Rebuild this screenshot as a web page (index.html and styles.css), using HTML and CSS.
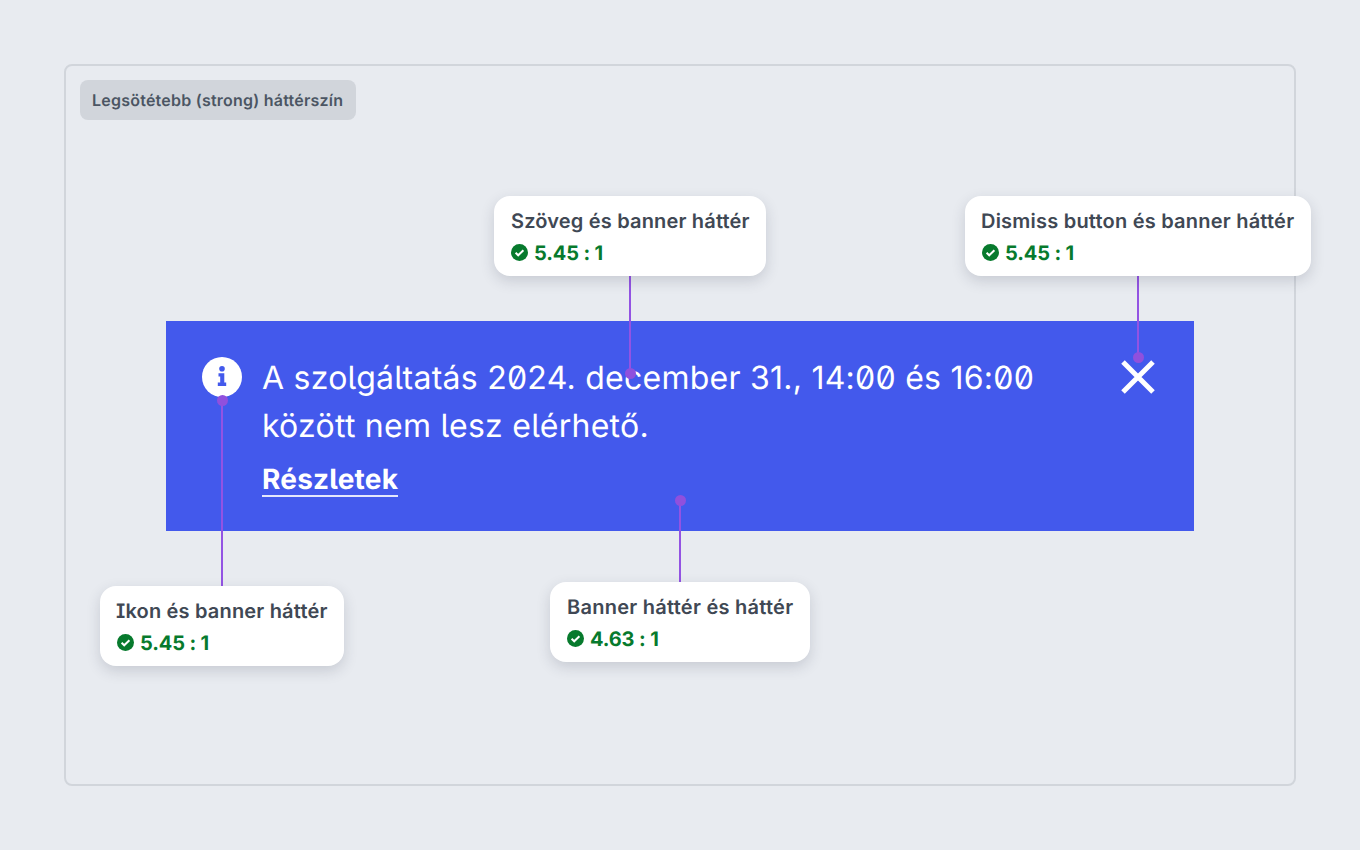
FILE: index.html
```html
<!DOCTYPE html>
<html lang="hu">
<head>
<meta charset="utf-8">
<title>Banner kontraszt</title>
<link rel="stylesheet" href="styles.css">
</head>
<body>
<main class="frame">
  <div class="tag">Legsötétebb (strong) háttérszín</div>
  <section class="banner">
    <svg class="info" viewBox="0 0 40 40" aria-hidden="true">
      <circle cx="20" cy="20" r="20" fill="#fff"/>
      <circle cx="20" cy="11.7" r="2.8" fill="#4359ec"/>
      <path d="M16.5 16.2h5.8v9.4h1.9V29h-8.4v-3.4h2.4v-6h-1.7z" fill="#4359ec"/>
    </svg>
    <div class="body">
      <p class="message">A szolgáltatás 2024. december 31., 14:00 és 16:00 között nem lesz elérhető.</p>
      <a class="more" href="#">Részletek</a>
    </div>
    <svg class="dismiss" viewBox="0 0 36 36" aria-hidden="true">
      <path d="M3 3l30 30M33 3L3 33" stroke="#fff" stroke-width="5" fill="none"/>
    </svg>
  </section>

  <div class="wire wire-text"></div>
  <div class="wire wire-dismiss"></div>
  <div class="wire wire-icon"></div>
  <div class="wire wire-bg"></div>

  <article class="note note-text">
    <h3>Szöveg és banner háttér</h3>
    <div class="ratio"><svg class="check" viewBox="0 0 17 17" aria-hidden="true"><circle cx="8.5" cy="8.5" r="8.5" fill="#077a2d"/><path d="M4.6 8.8l2.6 2.5L12.4 6.2" stroke="#fff" stroke-width="2" fill="none"/></svg>5.45 : 1</div>
  </article>
  <article class="note note-dismiss">
    <h3>Dismiss button és banner háttér</h3>
    <div class="ratio"><svg class="check" viewBox="0 0 17 17" aria-hidden="true"><circle cx="8.5" cy="8.5" r="8.5" fill="#077a2d"/><path d="M4.6 8.8l2.6 2.5L12.4 6.2" stroke="#fff" stroke-width="2" fill="none"/></svg>5.45 : 1</div>
  </article>
  <article class="note note-icon">
    <h3>Ikon és banner háttér</h3>
    <div class="ratio"><svg class="check" viewBox="0 0 17 17" aria-hidden="true"><circle cx="8.5" cy="8.5" r="8.5" fill="#077a2d"/><path d="M4.6 8.8l2.6 2.5L12.4 6.2" stroke="#fff" stroke-width="2" fill="none"/></svg>5.45 : 1</div>
  </article>
  <article class="note note-bg">
    <h3>Banner háttér és háttér</h3>
    <div class="ratio"><svg class="check" viewBox="0 0 17 17" aria-hidden="true"><circle cx="8.5" cy="8.5" r="8.5" fill="#077a2d"/><path d="M4.6 8.8l2.6 2.5L12.4 6.2" stroke="#fff" stroke-width="2" fill="none"/></svg>4.63 : 1</div>
  </article>
</main>
</body>
</html>
```
FILE: styles.css
```css
* { box-sizing: border-box; }
html, body { margin: 0; height: 100%; }
body {
  background: #e8ebf0;
  font-family: Inter, "Liberation Sans", sans-serif;
  font-feature-settings: "ss02" 1, "cv05" 1, "cv08" 1, "zero" 1;
  text-rendering: geometricPrecision;
  padding: 64px;
  overflow: hidden;
}
.frame {
  position: relative;
  width: 1232px;
  height: 722px;
  border: 2px solid #d1d5db;
  border-radius: 8px;
  padding: 14px;
}
.tag {
  display: inline-flex;
  align-items: center;
  width: 276px;
  height: 40px;
  padding: 0 12px;
  border-radius: 8px;
  background: #d1d5db;
  color: #4b5563;
  font-size: 16px;
  font-weight: 600;
  letter-spacing: .23px;
  white-space: nowrap;
}
.banner {
  display: flex;
  align-items: flex-start;
  gap: 20px;
  width: 1028px;
  height: 210px;
  margin: 201px 0 0 86px;
  padding: 32px 38px 0 36px;
  background: #4359ec;
  color: #fff;
}
.info { flex: none; width: 40px; height: 40px; margin-top: 4px; }
.body { flex: 1; }
.message {
  margin: 0;
  padding-top: 1px;
  max-width: 800px;
  font-size: 32px;
  line-height: 48px;
  letter-spacing: .25px;
}
.more {
  display: inline-block;
  margin-top: 13px;
  color: #fff;
  font-size: 28px;
  font-weight: 700;
  line-height: 32px;
  letter-spacing: .22px;
  text-decoration: none;
  border-bottom: 2px solid #e4e7fc;
}
.dismiss { flex: none; width: 36px; height: 36px; margin-top: 6px; }

.note {
  position: absolute;
  padding: 12px 0 0 17px;
  height: 80px;
  background: #fff;
  border-radius: 16px;
  box-shadow: 0 5px 14px rgba(40, 50, 70, .17);
  white-space: nowrap;
}
.note h3 {
  margin: 0;
  color: #404854;
  font-size: 20px;
  font-weight: 600;
  line-height: 26px;
  letter-spacing: .18px;
}
.ratio {
  display: flex;
  align-items: center;
  gap: 6px;
  margin-top: 6px;
  color: #077a2d;
  font-size: 20px;
  font-weight: 700;
  line-height: 26px;
  letter-spacing: -.12px;
}
.check { flex: none; width: 17px; height: 17px; margin-top: -1px; }
.note-text { left: 428px; top: 130px; width: 272px; }
.note-dismiss { left: 899px; top: 130px; width: 346px; padding-left: 16px; }
.note-dismiss h3 { letter-spacing: .22px; }
.note-dismiss .ratio { padding-left: 1px; }
.note-icon { left: 34px; top: 520px; width: 244px; padding-left: 16px; }
.note-icon .ratio { padding-left: 1px; }
.note-bg { left: 484px; top: 516px; width: 260px; }
.note-bg h3 { letter-spacing: .26px; }

.wire {
  position: absolute;
  width: 2px;
  background: #9353e3;
}
.wire::after {
  content: "";
  position: absolute;
  left: -4.5px;
  width: 11px;
  height: 11px;
  border-radius: 50%;
  background: #9050dd;
}
.wire-text { left: 563px; top: 200px; height: 108px; }
.wire-text::after { bottom: -5px; }
.wire-dismiss { left: 1071px; top: 200px; height: 92px; }
.wire-dismiss::after { bottom: -5px; }
.wire-icon { left: 155px; top: 334px; height: 190px; }
.wire-icon::after { top: -5px; }
.wire-bg { left: 613px; top: 434px; height: 86px; }
.wire-bg::after { top: -5px; }
```
